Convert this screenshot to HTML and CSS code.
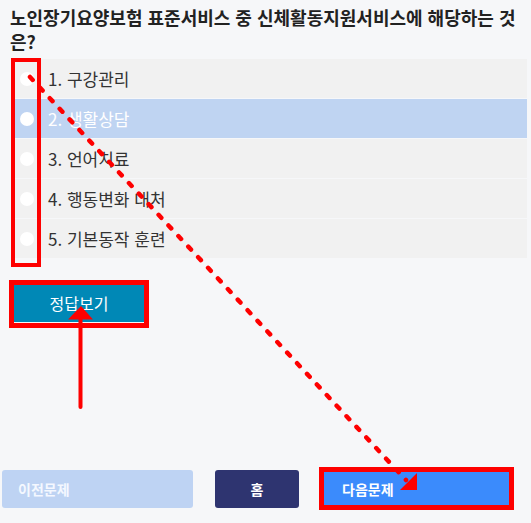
FILE: index.html
```html
<!DOCTYPE html>
<html lang="ko">
<head>
<meta charset="utf-8">
<link rel="stylesheet" href="styles.css">
</head>
<body>
<div class="page">
  <h1 class="question">노인장기요양보험 표준서비스 중 신체활동지원서비스에 해당하는 것은?</h1>
  <ul class="options">
    <li class="option"><span class="radio"></span><span class="label">1. 구강관리</span></li>
    <li class="option selected"><span class="radio"></span><span class="label">2. 생활상담</span></li>
    <li class="option"><span class="radio"></span><span class="label">3. 언어치료</span></li>
    <li class="option"><span class="radio"></span><span class="label">4. 행동변화 대처</span></li>
    <li class="option"><span class="radio"></span><span class="label">5. 기본동작 훈련</span></li>
  </ul>
  <div class="answer-row"><button class="btn-answer">정답보기</button></div>
  <div class="nav">
    <button class="btn btn-prev">이전문제</button>
    <button class="btn btn-home">홈</button>
    <button class="btn btn-next">다음문제</button>
  </div>
</div>
<svg class="annot" width="531" height="523" viewBox="0 0 531 523">
  <rect x="13" y="60" width="26" height="205" fill="none" stroke="#fe0000" stroke-width="4"/>
  <rect x="11.5" y="282.5" width="135" height="43" fill="none" stroke="#fe0000" stroke-width="5"/>
  <rect x="321.5" y="469.5" width="190" height="38" fill="none" stroke="#fe0000" stroke-width="5"/>
  <line x1="80.5" y1="407" x2="80.5" y2="316" stroke="#fe0000" stroke-width="4" stroke-linecap="round"/>
  <polygon points="81,306 68,319.5 93,319.5" fill="#fe0000"/>
  <line x1="30" y1="77" x2="406" y2="480" stroke="#fe0000" stroke-width="4.5" stroke-linecap="round" stroke-dasharray="4 10.5"/>
  <polygon points="417,473 417,490 400,490" fill="#fe0000"/>
</svg>
</body>
</html>
```
FILE: styles.css
```css
html, body {
  margin: 0;
  padding: 0;
  background: #f6f7f9;
}
body {
  position: relative;
  width: 531px;
  height: 523px;
  overflow: hidden;
  font-family: "Noto Sans CJK KR", "Noto Sans", sans-serif;
}
.page {
  display: flex;
  flex-direction: column;
  height: 523px;
  box-sizing: border-box;
  padding: 5px 4px 15px 0;
}
.question {
  margin: 0 0 0 10px;
  font-size: 18px;
  font-weight: 700;
  line-height: 24px;
  color: #222;
}
.options {
  list-style: none;
  margin: 6px 0 0 12px;
  padding: 0;
  display: flex;
  flex-direction: column;
  gap: 1px;
  background: #f6f7f9;
}
.option {
  height: 39px;
  background: #f1f1f1;
  display: flex;
  align-items: center;
  padding-left: 8px;
  font-size: 17px;
  color: #333;
}
.option.selected {
  background: #bfd4f2;
  color: #fff;
}
.radio {
  width: 14px;
  height: 14px;
  border-radius: 50%;
  background: #fff;
  margin-right: 14px;
  flex: none;
}
.answer-row {
  margin: 26px 0 0 14px;
}
.btn-answer {
  width: 130px;
  height: 38px;
  border: none;
  background: #0088b6;
  color: #fff;
  font-family: inherit;
  font-size: 16px;
  padding: 0;
}
.nav {
  margin-top: auto;
  margin-left: 2px;
  display: flex;
  gap: 22px;
}
.btn {
  height: 38px;
  border: none;
  border-radius: 3px;
  font-family: inherit;
  font-size: 14px;
  font-weight: 700;
  color: #fff;
  padding: 0;
}
.btn-prev {
  width: 191px;
  background: #bed3f3;
  text-align: left;
  padding-left: 16px;
  color: #f4f8ff;
}
.btn-home {
  width: 84px;
  background: #2e3470;
}
.btn-next {
  width: 191px;
  background: #3b8bfc;
  text-align: left;
  padding-left: 21px;
}
.annot {
  position: absolute;
  left: 0;
  top: 0;
  pointer-events: none;
}
```
